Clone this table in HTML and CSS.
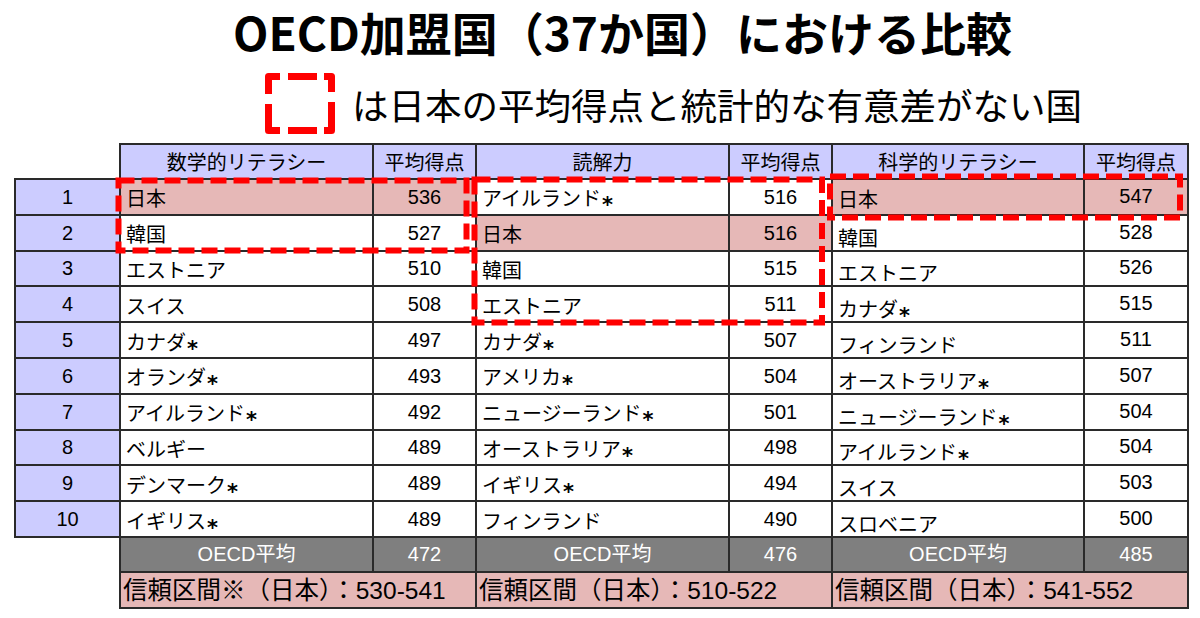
FILE: index.html
```html
<!DOCTYPE html>
<html lang="ja">
<head>
<meta charset="utf-8">
<title>OECD加盟国（37か国）における比較</title>
<link rel="stylesheet" href="styles.css">
</head>
<body>
<h1 class="title">OECD加盟国（37か国）における比較</h1>
<div class="legend">
  <svg class="legend-icon" width="70" height="61" viewBox="0 0 70 61" aria-hidden="true">
    <g fill="none" stroke="#ff0000" stroke-width="7" stroke-linejoin="round">
      <path d="M3.5 21 V3.5 H15"/>
      <path d="M23 3.5 H52"/>
      <path d="M59 3.5 H66.5 V19"/>
      <path d="M3.5 31 V57.5 H15"/>
      <path d="M23 57.5 H52"/>
      <path d="M59 57.5 H66.5 V29"/>
    </g>
  </svg>
  <span class="legend-text">は日本の平均得点と統計的な有意差がない国</span>
</div>
<div class="board">
  <table class="ranking">
    <colgroup>
      <col class="c-rank"><col class="c-name"><col class="c-score"><col class="c-name"><col class="c-score"><col class="c-name2"><col class="c-score2">
    </colgroup>
    <thead>
      <tr class="head">
        <th class="blank"></th>
        <th>数学的リテラシー</th><th>平均得点</th>
        <th>読解力</th><th>平均得点</th>
        <th>科学的リテラシー</th><th>平均得点</th>
      </tr>
    </thead>
    <tbody>
      <tr><td class="rank">1</td><td class="name hl">日本</td><td class="score hl">536</td><td class="name">アイルランド<span class="ast">*</span></td><td class="score">516</td><td class="name sci hl first">日本</td><td class="score sci-score hl">547</td></tr>
      <tr><td class="rank">2</td><td class="name">韓国</td><td class="score">527</td><td class="name hl">日本</td><td class="score hl">516</td><td class="name sci">韓国</td><td class="score sci-score">528</td></tr>
      <tr><td class="rank">3</td><td class="name">エストニア</td><td class="score">510</td><td class="name">韓国</td><td class="score">515</td><td class="name sci">エストニア</td><td class="score sci-score">526</td></tr>
      <tr><td class="rank">4</td><td class="name">スイス</td><td class="score">508</td><td class="name">エストニア</td><td class="score">511</td><td class="name sci">カナダ<span class="ast">*</span></td><td class="score sci-score">515</td></tr>
      <tr><td class="rank">5</td><td class="name">カナダ<span class="ast">*</span></td><td class="score">497</td><td class="name">カナダ<span class="ast">*</span></td><td class="score">507</td><td class="name sci">フィンランド</td><td class="score sci-score">511</td></tr>
      <tr><td class="rank">6</td><td class="name">オランダ<span class="ast">*</span></td><td class="score">493</td><td class="name">アメリカ<span class="ast">*</span></td><td class="score">504</td><td class="name sci">オーストラリア<span class="ast">*</span></td><td class="score sci-score">507</td></tr>
      <tr><td class="rank">7</td><td class="name">アイルランド<span class="ast">*</span></td><td class="score">492</td><td class="name">ニュージーランド<span class="ast">*</span></td><td class="score">501</td><td class="name sci">ニュージーランド<span class="ast">*</span></td><td class="score sci-score">504</td></tr>
      <tr><td class="rank">8</td><td class="name">ベルギー</td><td class="score">489</td><td class="name">オーストラリア<span class="ast">*</span></td><td class="score">498</td><td class="name sci">アイルランド<span class="ast">*</span></td><td class="score sci-score">504</td></tr>
      <tr><td class="rank">9</td><td class="name">デンマーク<span class="ast">*</span></td><td class="score">489</td><td class="name">イギリス<span class="ast">*</span></td><td class="score">494</td><td class="name sci">スイス</td><td class="score sci-score">503</td></tr>
      <tr><td class="rank">10</td><td class="name">イギリス<span class="ast">*</span></td><td class="score">489</td><td class="name">フィンランド</td><td class="score">490</td><td class="name sci">スロベニア</td><td class="score sci-score">500</td></tr>
      <tr class="avg"><td class="blank"></td><td>OECD平均</td><td>472</td><td>OECD平均</td><td>476</td><td>OECD平均</td><td>485</td></tr>
      <tr class="ci"><td class="blank"></td><td colspan="2">信頼区間※（日本）：530-541</td><td colspan="2">信頼区間（日本）：510-522</td><td colspan="2">信頼区間（日本）：541-552</td></tr>
    </tbody>
  </table>
  <svg class="marks" width="1200" height="480" viewBox="0 0 1200 480" aria-hidden="true">
    <g fill="none" stroke="#ff0000" stroke-width="6" stroke-dasharray="16 7">
      <rect x="118.5" y="37.5" width="348" height="70"/>
      <rect x="474.5" y="36.5" width="347.5" height="143"/>
      <rect x="830" y="33.5" width="350" height="41"/>
    </g>
  </svg>
</div>
</body>
</html>
```

FILE: styles.css
```css
html, body {
  margin: 0;
  padding: 0;
  background: #ffffff;
}

body {
  width: 1200px;
  height: 618px;
  overflow: hidden;
  font-family: "Liberation Sans", "Noto Sans CJK JP", sans-serif;
  color: #000000;
}

.title {
  margin: 0;
  height: 63px;
  padding-left: 233px;
  font-family: "Noto Sans CJK JP", sans-serif;
  font-weight: 700;
  font-size: 46px;
  line-height: 63px;
  white-space: nowrap;
}

.legend {
  height: 80px;
  display: flex;
  align-items: center;
  padding-left: 265px;
  gap: 17px;
}

.legend-icon {
  display: block;
  flex: none;
}

.legend-text {
  font-family: "Noto Sans CJK JP", sans-serif;
  font-size: 36.5px;
  line-height: 40px;
  padding-top: 4px;
  white-space: nowrap;
}

.board {
  position: relative;
  padding-left: 14px;
}

.ranking {
  border-collapse: collapse;
  table-layout: fixed;
  width: 1173px;
}

.c-rank { width: 105px; }
.c-name { width: 253px; }
.c-score { width: 103px; }
.c-name2 { width: 252px; }
.c-score2 { width: 104px; }

.ranking th,
.ranking td {
  border: 2px solid #2a2a2a;
  padding: 0;
  white-space: nowrap;
  box-sizing: border-box;
}

.ranking .blank {
  border: none;
  background: transparent;
}

.ranking tr.head {
  height: 35px;
}

.head th {
  height: 35px;
  background: #ccccff;
  font-family: "Noto Sans CJK JP", sans-serif;
  font-weight: 400;
  font-size: 20px;
  line-height: 20px;
  text-align: center;
  vertical-align: middle;
}

.ranking tbody tr {
  height: 35.8px;
}

.ranking tbody td {
  height: 35.8px;
}

.rank {
  background: #ccccff;
  text-align: center;
  font-size: 20px;
  line-height: 20px;
  vertical-align: middle;
}

.ranking .name {
  font-size: 20px;
  line-height: 20px;
  padding: 5px 0 0 5px;
  vertical-align: middle;
  text-align: left;
}

.ranking .name.sci {
  padding-top: 12px;
}

.ranking .name.sci.first {
  padding-top: 6px;
}

.ast {
  font-family: "DejaVu Sans", sans-serif;
  font-weight: 700;
  font-size: 21px;
  line-height: 0;
  vertical-align: -6px;
  margin-left: 1px;
}

.ranking .score {
  font-size: 20px;
  line-height: 20px;
  text-align: center;
  vertical-align: middle;
}

.ranking .score.sci-score {
  padding-bottom: 2px;
}

.hl {
  background: #e6b8b7;
}

.ranking tr.avg,
.ranking tr.avg td {
  height: 35px;
}

.avg td {
  background: #7f7f7f;
  color: #ffffff;
  font-size: 20px;
  line-height: 20px;
  text-align: center;
  vertical-align: middle;
}

.avg td.blank {
  background: transparent;
}

.ranking tr.ci,
.ranking tr.ci td {
  height: 36px;
}

.ranking .ci td {
  background: #e6b8b7;
  font-size: 24.5px;
  line-height: 26px;
  text-align: left;
  padding: 3px 0 0 2px;
  vertical-align: middle;
}

.ci td.blank {
  background: transparent;
}

.marks {
  position: absolute;
  left: 0;
  top: 0;
  pointer-events: none;
}
```
